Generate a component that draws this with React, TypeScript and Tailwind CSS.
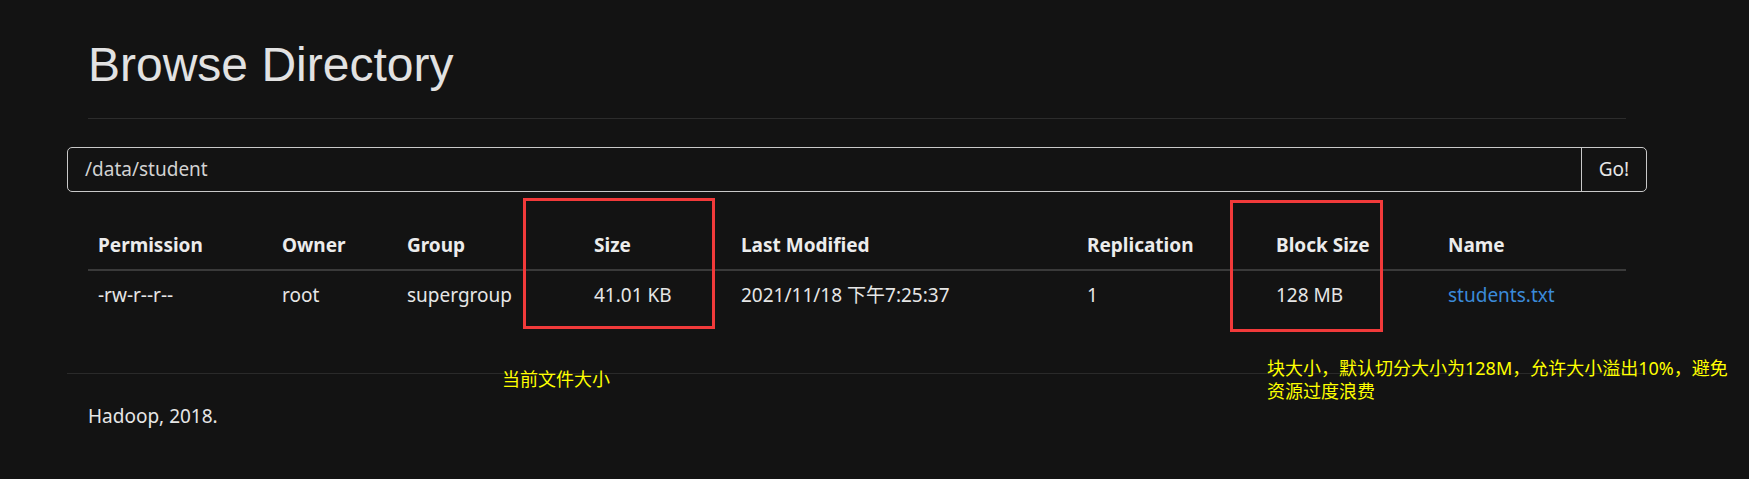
import React from 'react'

const cols = ['Permission', 'Owner', 'Group', 'Size', 'Last Modified', 'Replication', 'Block Size', 'Name']

const row = ['-rw-r--r--', 'root', 'supergroup', '41.01 KB', '2021/11/18 下午7:25:37', '1', '128 MB', 'students.txt']

const grid = 'grid grid-cols-[184px_125px_187px_147px_346px_189px_172px_188px]'

export default function App() {
  return (
    <div
      className="relative min-h-screen w-full bg-[#131313] pt-[40px] text-[#e6e6e6]"
      style={{ fontFamily: '"Noto Sans", "Noto Sans CJK SC", sans-serif' }}
    >
      <div className="ml-[67px] w-[1580px]">
        {/* header */}
        <div className="mx-[21px] border-b border-[#2c2c2c] pb-[28px]">
          <h1
            className="text-[48px] leading-[50px] font-normal text-[#e2e2e2]"
            style={{ fontFamily: '"Liberation Sans", Arial, sans-serif' }}
          >
            Browse Directory
          </h1>
        </div>

        {/* path input */}
        <div className="mt-[28px] flex h-[45px] rounded-[5px] border border-[#c9c9c9]">
          <div className="flex flex-1 items-center pl-[17px] text-[19px] text-[#d2d2d2]">/data/student</div>
          <button className="flex w-[65px] items-center justify-center border-l border-[#c9c9c9] text-[19px] text-[#e6e6e6]">
            Go!
          </button>
        </div>

        {/* listing */}
        <div className="mx-[21px] mt-[30px] text-[19px] leading-[26px]">
          <div className={`${grid} border-b-2 border-[#3a3a3a] font-bold text-[#ececec]`}>
            {cols.map(c => (
              <div key={c} className="pl-[10px] pt-[10px] pb-[11px]">{c}</div>
            ))}
          </div>
          <div className={grid}>
            {row.map((v, i) => (
              <div
                key={i}
                className={`pl-[10px] pt-[11px] pb-[11px] whitespace-nowrap ${i === 7 ? 'text-[#3b8ad8]' : ''}`}
              >
                {v}
              </div>
            ))}
          </div>
        </div>

        {/* footer */}
        <div className="mt-[54px] border-t border-[#2a2a2a] pt-[29px]">
          <p className="ml-[21px] text-[19px] leading-[26px]">Hadoop, 2018.</p>
        </div>
      </div>

      {/* annotations */}
      <div className="absolute left-[523px] top-[198px] h-[131px] w-[192px] border-[3px] border-[#f23a3a]" />
      <div className="absolute left-[1230px] top-[200px] h-[132px] w-[153px] border-[3px] border-[#f23a3a]" />
      <div className="absolute left-[502px] top-[368px] text-[18px] leading-[23px] text-[#ffff00]">当前文件大小</div>
      <div className="absolute left-[1267px] top-[357px] text-[18px] leading-[23px] text-[#ffff00]">
        <div className="whitespace-nowrap">块大小，默认切分大小为128M，允许大小溢出10%，避免</div>
        <div className="whitespace-nowrap">资源过度浪费</div>
      </div>
    </div>
  )
}
